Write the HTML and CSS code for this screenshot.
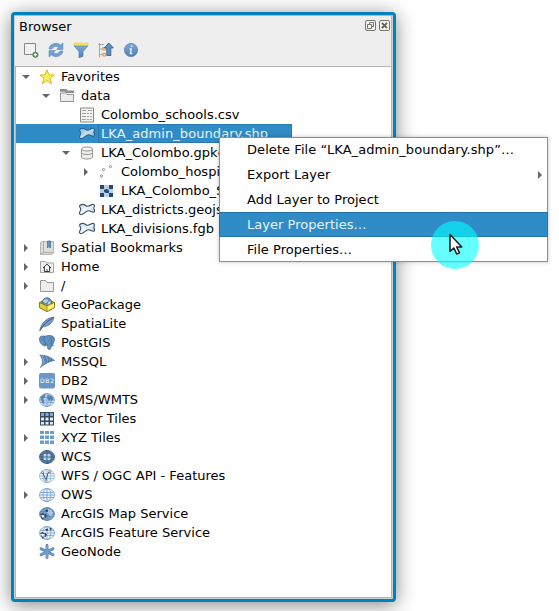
FILE: index.html
```
<!DOCTYPE html>
<html lang="en">
<head>
<meta charset="utf-8">
<title>Browser</title>
<link rel="stylesheet" href="styles.css">
</head>
<body>
<svg class="defs" aria-hidden="true">
  <defs>
    <linearGradient id="poly" x2="1" y2="1"><stop offset="0" stop-color="#c3dbf3"/><stop offset=".45" stop-color="#f4f9fe"/><stop offset="1" stop-color="#9dc0e6"/></linearGradient>
    <linearGradient id="polysel" x2="1" y2="1"><stop offset="0" stop-color="#7fb3e0"/><stop offset=".5" stop-color="#c4def4"/><stop offset="1" stop-color="#5f9fd6"/></linearGradient>
    <linearGradient id="blue" x2="0" y2="1"><stop offset="0" stop-color="#7eabd8"/><stop offset="1" stop-color="#4f80b4"/></linearGradient>
    <symbol id="shape" viewBox="0 0 16 16"><path d="M1 3.200C3 2 5 2.300 6.500 3.500S10.500 4 12 3s2.500-.8 3.200 0c.6 1.500-.7 2.500-.2 4 .9 1.500.8 3-.5 3.300-2 .2-3.200-1.800-5.300-1.500C6.500 9.200 5 12.500 2 12.700.3 12.600.2 11 1 9.500s1-2.300.3-3.500S.2 4.200 1 3.200z"/></symbol>
    <symbol id="globe" viewBox="0 0 16 16"><ellipse cx="8" cy="8" rx="7.500" ry="6.500"/><path d="M1 5.500h14M.5 8h15M1 10.500h14M8 1.500v13"/><ellipse cx="8" cy="8" rx="4" ry="6.500" fill="none"/></symbol>
  </defs>
</svg>
<main class="panel">
  <header class="head">
    <div class="title"><span>Browser</span>
      <div class="buttons">
        <svg width="11" height="11" viewBox="0 0 11 11"><rect x=".5" y=".5" width="10" height="10" rx="1.500" fill="#f4f4f2" stroke="#77776f"/><path d="M4.500 4.500V2.500h4v4h-2M2.500 4.500h4v4h-4z" fill="none" stroke="#77776f"/></svg>
        <svg width="11" height="11" viewBox="0 0 11 11"><rect x=".5" y=".5" width="10" height="10" rx="1.500" fill="#f4f4f2" stroke="#77776f"/><path d="M2.900 2.900l5.200 5.200M8.100 2.900L2.900 8.100" stroke="#66665f" stroke-width="1.900"/></svg>
      </div>
    </div>
    <div class="tools">
      <svg viewBox="0 0 16 16"><path d="M1.500 1.500h11v11h-11z" fill="#f1f2f0" stroke="#858782"/><circle cx="12.400" cy="12.700" r="2.700" fill="#5e9865" stroke="#34733d" stroke-width=".6"/><path d="M12.400 11.200v3M10.900 12.700h3" stroke="#fff" stroke-width="1.200"/></svg>
      <svg viewBox="0 0 16 16"><path d="M1 7C1.500 2 8.500-.5 12.500 3L15 1v6.500H8.500l2-2C8 3.500 5 4.500 4 7z" fill="#6f9fd4" stroke="#5685bb" stroke-width=".5"/><path d="M15 9C14.500 14 7.500 16.500 3.500 13L1 15V8.500h6.500l-2 2C8 12.500 11 11.500 12 9z" fill="#6f9fd4" stroke="#5685bb" stroke-width=".5"/></svg>
      <svg viewBox="0 0 16 16"><path d="M1 3.800h14L10 9.500v4.700l-4 1.500V9.500z" fill="url(#blue)" stroke="#4b7097" stroke-width=".6"/><path d="M1 1h14v2.300H1z" fill="#fce94f" stroke="#d8c529" stroke-width=".5"/></svg>
      <svg viewBox="0 0 16 16"><path d="M1.500 1v14M0 2.500h6M1.500 7h4M1.500 12.500h4" fill="none" stroke="#a9a9a3"/><path d="M5 5.500h2.500V8H5zM5 11.500h2.500V14H5z" fill="#fff3d8" stroke="#ef9b34" stroke-width="1.200"/><path d="M10.800 1l4.600 5h-2.600v7.500h-4V6H6.200z" fill="#5e8fc4" stroke="#35597f" stroke-width=".8"/></svg>
      <svg viewBox="0 0 16 16"><circle cx="8" cy="8" r="6.600" fill="url(#blue)" stroke="#4e7eb2" stroke-width=".7"/><path d="M8.900 3.600l-.3 1.600M6.500 7h1.700l-.8 4.500h1.900" fill="none" stroke="#e8f1fa" stroke-width="1.400"/></svg>
    </div>
  </header>
  <section class="tree">
    <div class="row"><i class="arrow open"></i><svg viewBox="0 0 16 16"><path d="M8 .8l1.900 5 5.300.2-4.200 3.300 1.600 5.500L8 11.700l-4.600 3.100L5 9.300.8 6l5.300-.2z" fill="#fcee65" stroke="#dcb912"/></svg><span>Favorites</span></div>
    <div class="row l1"><i class="arrow open"></i><svg viewBox="0 0 16 16"><path d="M1 1h6.500l1 1.500H15V5H7L6 3.800H1z" fill="#8c8e89"/><path d="M1.500 5h5L8 6.500h6.500v7h-13z" fill="#ededeb" stroke="#93958f"/></svg><span>data</span></div>
    <div class="row l2"><i class="arrow"></i><svg viewBox="0 0 16 16"><path d="M1.500 1h13v14h-13z" fill="#f2f2f0" stroke="#888a85"/><path d="M3 3.500h4M9 3.500h4M3 6.500h4M8 6.500h2M11 6.500h2M3 9.500h4M8 9.500h2M11 9.500h2M3 12.500h4M8 12.500h2M11 12.500h2" stroke="#a0a19c"/></svg><span>Colombo_schools.csv</span></div>
    <div class="row l2 selected"><i class="arrow"></i><svg viewBox="0 0 16 16"><use href="#shape" fill="url(#polysel)" stroke="#25567f" stroke-width="1"/></svg><span>LKA_admin_boundary.shp</span></div>
    <div class="row l2"><i class="arrow open"></i><svg viewBox="0 0 16 16"><path d="M2.500 4v8.500c2 2 9 2 11 0V4" fill="#eee" stroke="#93958f"/><ellipse cx="8" cy="4" rx="5.500" ry="2" fill="#f7f7f6" stroke="#93958f"/><path d="M2.500 8c2 2 9 2 11 0" fill="none" stroke="#93958f"/></svg><span>LKA_Colombo.gpkg</span></div>
    <div class="row l3"><i class="arrow closed"></i><svg viewBox="0 0 16 16"><g fill="#fff" stroke="#858782" stroke-width=".9"><circle cx="2.500" cy="12" r="1.100"/><circle cx="4.500" cy="5.500" r="1.100"/><circle cx="11.500" cy="2.500" r="1.100"/></g></svg><span>Colombo_hospitals</span></div>
    <div class="row l3"><i class="arrow"></i><svg viewBox="0 0 16 16"><path d="M1 2h13v12H1z" fill="#b4cfeb"/><path d="M1 2h4v4H1zM10 2h4v4h-4zM5 6h5v4H5zM10 10h4v4h-4zM1 10h4v4H1z" fill="#2c4665"/><path d="M5 6h1.500v1H5zM8.500 6H10v1.500H8.500zM5 9h1.500v1H5z" fill="#7fa6d4"/></svg><span>LKA_Colombo_SRTM</span></div>
    <div class="row l2"><i class="arrow"></i><svg viewBox="0 0 16 16"><use href="#shape" fill="url(#poly)" stroke="#3d4f63" stroke-width="1.1"/></svg><span>LKA_districts.geojson</span></div>
    <div class="row l2"><i class="arrow"></i><svg viewBox="0 0 16 16"><use href="#shape" fill="url(#poly)" stroke="#3d4f63" stroke-width="1.1"/></svg><span>LKA_divisions.fgb</span></div>
    <div class="row"><i class="arrow closed"></i><svg viewBox="0 0 16 16"><path d="M1.500 2.500l1.500-1h11.500V13L13 14.500H1.500z" fill="#deded9" stroke="#b4b3ae"/><path d="M4.500 2v10.500l-3 1.500M4.500 12.500h10" fill="none" stroke="#aaaba6"/><path d="M8.500 1h3v7L10 6.500 8.500 8z" fill="#6594c9" stroke="#416995" stroke-width=".7"/></svg><span>Spatial Bookmarks</span></div>
    <div class="row"><i class="arrow closed"></i><svg viewBox="0 0 16 16"><path d="M1.500 2.500h4.700l1.500 1.500h6.800v9.500h-13z" fill="#eee" stroke="#a3a49f"/><path d="M4 9l4-3.800L12 9M5.400 8v4.500h5.200V8" fill="#fff" stroke="#333"/><path d="M8 10v2.500" stroke="#444"/></svg><span>Home</span></div>
    <div class="row"><i class="arrow closed"></i><svg viewBox="0 0 16 16"><path d="M1.500 2.500h5L8 4.500h6.500v9h-13z" fill="#ededeb" stroke="#999a95"/></svg><span>/</span></div>
    <div class="row"><i class="arrow"></i><svg viewBox="0 0 16 16"><path d="M.5 5.500L8 2l7.500 3.500v5L8 14.500l-7.500-4z" fill="#b89a13" stroke="#685811" stroke-width=".7"/><circle cx="8" cy="5" r="4.300" fill="#6792be" stroke="#365574" stroke-width=".7"/><path d="M5 3l3-1 1 2-2 2-3-1M9 5l3-1-1 3-2 1z" fill="#bad3eb"/><path d="M.5 5.500L8 9l7.500-3.500v5L8 14.500l-7.500-4z" fill="#e9cf2c" stroke="#79671c" stroke-width=".7"/><path d="M8 9l7.500-3.500v5L8 14.500z" fill="#fff36b" stroke="#79671c" stroke-width=".6"/></svg><span>GeoPackage</span></div>
    <div class="row"><i class="arrow"></i><svg viewBox="0 0 16 16"><path d="M.8 14.500C2 7 8 1.500 15 1c-.5 5-5 9.500-11 9.800z" fill="#729dcb" stroke="#4d6c8d" stroke-width=".7"/><path d="M.8 14.800C4 9 8 5 14.500 1.500" fill="none" stroke="#34506d" stroke-width=".9"/></svg><span>SpatiaLite</span></div>
    <div class="row"><i class="arrow"></i><svg viewBox="0 0 16 16"><path d="M1 2c2-1.500 4-1 5-.7C8.500.2 14-.3 15.300 3c.7 3-1 5-1.600 6.500 1 .5 1.300 1.500-.7 1.500h-1v2.500c-1 1.500-3.500 1-3.500-.8V9.500L6.500 11C3 11 .5 7.500.5 4z" fill="#6192c6" stroke="#456482" stroke-width=".7"/><path d="M6 1.500C4 4 5 7 7 8l-1 2M11 1.500c2.500 2.500 1 5.500 1 8.500M9.500 5h1" fill="none" stroke="#3f5e7d" stroke-width=".8"/></svg><span>PostGIS</span></div>
    <div class="row"><i class="arrow closed"></i><svg viewBox="0 0 16 16"><path d="M.8 1.200C6 1 11 2.500 15.500 6.500 11 7 6 9.500 1.500 13.500 4.500 9 4 5 .8 1.200z" fill="#6f9bc9" stroke="#4a6d90" stroke-width=".7"/><path d="M5 2c2.700 3 2.600 5 .8 8.300M8.500 2.500c2 2.500 2 3.500.5 5.800M12 4c1 1.500 1 2 0 3" fill="none" stroke="#3f6184" stroke-width=".9"/></svg><span>MSSQL</span></div>
    <div class="row"><i class="arrow closed"></i><svg viewBox="0 0 16 16"><rect width="16" height="15.500" rx="2" fill="#6997ca"/><text x="8" y="9.500" text-anchor="middle" textLength="14" class="db2">DB2</text></svg><span>DB2</span></div>
    <div class="row"><i class="arrow closed"></i><svg viewBox="0 0 16 16"><use href="#globe" fill="#c7dcf1" stroke="#6590bd" stroke-width=".6"/><path d="M1.500 5l4-3 1 1-1 3-2 1 2 2-1.500 3-2-4zM9 3l4 1 1.500 3-2 2.500-1-2.500-1.500 3-1-3-1.500-1z" fill="#5883af"/></svg><span>WMS/WMTS</span></div>
    <div class="row"><i class="arrow"></i><svg viewBox="0 0 16 16"><path d="M1 1h14v13.500H1z" fill="#364a60"/><path d="M2 2h3v3H2zm4.500 0h3v3h-3zM11 2h3v3h-3z" fill="#86a9cf"/><path d="M2 6.500h3v3H2zm4.500 0h3v3h-3zm4.500 0h3v3h-3zM2 11h3v2.500H2zm4.500 0h3v2.500h-3zm4.500 0h3v2.500h-3z" fill="#e3edf7"/></svg><span>Vector Tiles</span></div>
    <div class="row"><i class="arrow closed"></i><svg viewBox="0 0 16 16"><path d="M1 1h4v3H1zm5 0h4v3H6zm5 0h4v3h-4zM1 5.500h4v3.500H1zm5 0h4v3.500H6zm5 0h4v3.500h-4zM1 10.500h4V14H1zm5 0h4V14H6zm5 0h4V14h-4z" fill="#6c9bce"/></svg><span>XYZ Tiles</span></div>
    <div class="row"><i class="arrow"></i><svg viewBox="0 0 16 16"><use href="#globe" fill="#587fa9" stroke="#3f5d7d" stroke-width=".8"/><path d="M4.500 5h3v2.500h-3zm4 0h3v2.500h-3zM4.500 8.500h3V11h-3zm4 0h3V11h-3z" fill="#b9d2eb"/></svg><span>WCS</span></div>
    <div class="row"><i class="arrow"></i><svg viewBox="0 0 16 16"><use href="#globe" fill="#f2f8fe" stroke="#83abd5" stroke-width=".7"/><path d="M3.500 4.500L7 12l2-7 2-1.500" fill="none" stroke="#4a5d72"/><g fill="#fff" stroke="#4a5d72" stroke-width=".6"><circle cx="3.500" cy="4.500" r="1"/><circle cx="7" cy="12" r="1"/><circle cx="11" cy="3.500" r="1"/></g></svg><span>WFS / OGC API - Features</span></div>
    <div class="row"><i class="arrow closed"></i><svg viewBox="0 0 16 16"><use href="#globe" fill="#edf5fd" stroke="#719ccc" stroke-width=".8"/></svg><span>OWS</span></div>
    <div class="row"><i class="arrow"></i><svg viewBox="0 0 16 16"><use href="#globe" fill="#7ba4cd" stroke="#5a82ac" stroke-width=".7"/><path d="M9 3l3 1 2 3-2 4-2-3-2-1z" fill="#a9c6e3"/><path d="M1 8.500l3-1 1.500 1.500M2.500 11l2-.5L4 13.500zM6 8l1.500 1.500L6 12zM6.500 4.500L9 4 8 6z" fill="#32414f" stroke="#32414f" stroke-width=".8"/><path d="M2.500 9.500l2-.5 1 2-2 1z" fill="#eee"/></svg><span>ArcGIS Map Service</span></div>
    <div class="row"><i class="arrow"></i><svg viewBox="0 0 16 16"><use href="#globe" fill="#edf5fd" stroke="#779fc9" stroke-width=".8"/><path d="M1 8.500l3-1 1.500 1.500M2.500 11l2-.5L4 13.500zM6 8l1.500 1.500L6 12zM6.500 4.500L9 4 8 6zM11 3l1.500.7-1 1.500z" fill="#32414f" stroke="#32414f" stroke-width=".8"/><path d="M2.500 9.500l2-.5 1 2-2 1z" fill="#eee"/></svg><span>ArcGIS Feature Service</span></div>
    <div class="row"><i class="arrow"></i><svg viewBox="0 0 16 16"><path d="M8 1.500v12M2 4.700l12 6M14 4.700l-12 6" stroke="#4a719b" stroke-width="2.800" stroke-linecap="round"/><path d="M8 1.500v12M2 4.700l12 6M14 4.700l-12 6" stroke="#6e9dcc" stroke-width="2" stroke-linecap="round"/></svg><span>GeoNode</span></div>
  </section>
</main>
<nav class="menu">
  <div class="item"><span class="long">Delete File “LKA_admin_boundary.shp”…</span></div>
  <div class="item">Export Layer<i class="arrow closed"></i></div>
  <div class="item">Add Layer to Project</div>
  <div class="item active">Layer Properties…</div>
  <div class="item">File Properties…</div>
</nav>
<div class="pointer"><svg width="16" height="24" viewBox="0 0 16 24"><path d="M2 1.500v17l3.800-3.500 2.900 6 2.800-1.300-2.900-5.700h5.200z" fill="#fff" stroke="#222" stroke-width="1.600" stroke-linejoin="round"/></svg></div>
</body>
</html>
```

FILE: styles.css
```
* { box-sizing: border-box; }
body { margin: 0; padding: 12px 0 0 11px; width: 559px; height: 611px; overflow: hidden; background: #fff; color: #000; font: 13px/19px "DejaVu Sans", sans-serif; }
svg { display: block; flex: none; }
.defs { position: absolute; width: 0; height: 0; }
.panel { width: 385px; height: 590px; border: 3px solid #0082bd; border-radius: 4px; background: #d0d0d0; box-shadow: 0 3px 20px rgba(0, 0, 0, .48); }
.head { height: 51px; margin: 0 1px; padding: 1px 2px 0 4px; border: 1px solid #b8b8b8; border-width: 1px 1px 0 0; background: #eee; }
.title { display: flex; justify-content: space-between; height: 20px; }
.buttons { display: flex; gap: 3px; padding: 3px 0 0; margin-right: -1px; }
.tools { display: flex; gap: 9px; padding: 5px 0 0 4px; }
.tools svg { width: 16px; height: 16px; }
.tree { height: 532px; margin: 0 1px 0 1px; border: 1px solid #b4b4b4; background: #fff; }
.row { display: flex; align-items: center; height: 19px; white-space: nowrap; }
.row svg { width: 16px; height: 16px; margin: 0 3px 0 7px; }
.row span { padding: 0 3px; letter-spacing: .02px; }
.l1 { padding-left: 20px; }
.l2 { padding-left: 40px; }
.l3 { padding-left: 60px; }
.arrow { display: flex; width: 8px; height: 8px; margin-left: 6px; margin-right: 2px; flex: none; }
.arrow::before { content: ""; margin: auto; }
.open::before { border: 4px solid transparent; border-top: 4px solid #666; border-bottom: 0; }
.closed::before { border: 4px solid transparent; border-left: 4px solid #666; border-right: 0; }
.selected { width: 276px; background: #308cc6; color: #e8f3fc; }
.selected span { flex: 1; height: 19px; border: 1px solid #2779b0; padding: 0 2px; line-height: 17px; letter-spacing: .07px; }
.db2 { font: 6px "DejaVu Sans", sans-serif; fill: #fff; }
.menu { position: absolute; left: 219px; top: 137px; width: 329px; background: #fff; box-shadow: inset 0 0 0 1px #8e8e8e, 0 0 4px rgba(0, 0, 0, .25); }
.item { display: flex; align-items: center; justify-content: space-between; height: 25px; padding: 0 2px 0 28px; white-space: nowrap; letter-spacing: .03px; }
.long { letter-spacing: .07px; }
.active { background: #308cc6; color: #e8f3fc; border: 1px solid #2573a7; padding-left: 27px; }
.pointer { position: absolute; left: 431px; top: 221px; width: 48px; height: 48px; padding: 12px 0 0 17px; border-radius: 50%; background: rgba(0, 255, 255, .6); }
.pointer svg { position: relative; }
```
